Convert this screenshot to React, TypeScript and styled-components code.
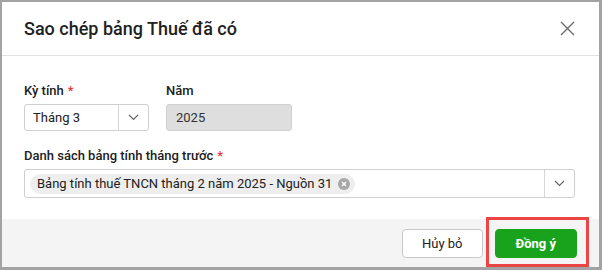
import React from "react";
import styled, { createGlobalStyle } from "styled-components";

const GlobalStyle = createGlobalStyle`
  html, body {
    margin: 0;
    padding: 0;
    background: #ffffff;
  }
  body {
    font-family: Roboto, "Noto Sans", "Liberation Sans", sans-serif;
    color: #212121;
  }
  * {
    box-sizing: border-box;
  }
`;

const Dialog = styled.div`
  position: relative;
  width: 602px;
  height: 270px;
  display: flex;
  flex-direction: column;
  background: #ffffff;
  border: 2px solid #a3a3a3;
  border-right-width: 3px;
  border-bottom-width: 3px;
`;

const Header = styled.div`
  height: 54px;
  flex-shrink: 0;
  display: flex;
  align-items: center;
  justify-content: space-between;
  padding: 0 22px;
  border-bottom: 1px solid #e2e2e2;
`;

const Title = styled.h2`
  margin: 0;
  font-size: 18px;
  font-weight: 500;
  color: #212121;
`;

const CloseButton = styled.button`
  width: 24px;
  height: 24px;
  padding: 0;
  margin-right: -2px;
  border: none;
  background: transparent;
  display: flex;
  align-items: center;
  justify-content: center;
  cursor: pointer;
`;

const Body = styled.div`
  flex: 1;
  padding: 27px 24px 0 22px;
  display: flex;
  flex-direction: column;
  gap: 17px;
`;

const Row = styled.div`
  display: flex;
  gap: 17px;
`;

const Field = styled.div<{ $width?: number }>`
  display: flex;
  flex-direction: column;
  gap: 5px;
  width: ${(p) => (p.$width ? `${p.$width}px` : "100%")};
`;

const Label = styled.label`
  font-size: 13px;
  font-weight: 500;
  line-height: 16px;
  color: #212121;
`;

const Required = styled.span`
  color: #e53935;
  margin-left: 4px;
`;

const SelectBox = styled.div<{ $height?: number }>`
  height: ${(p) => p.$height ?? 27}px;
  display: flex;
  align-items: stretch;
  border: 1px solid #cfcfcf;
  border-radius: 3px;
  background: #ffffff;
`;

const SelectValue = styled.div`
  flex: 1;
  display: flex;
  align-items: center;
  padding-left: 8px;
  font-size: 13px;
  color: #212121;
  overflow: hidden;
`;

const Arrow = styled.div`
  width: 30px;
  border-left: 1px solid #d6d6d6;
  display: flex;
  align-items: center;
  justify-content: center;
`;

const ReadOnlyInput = styled.div`
  height: 27px;
  display: flex;
  align-items: center;
  padding-left: 9px;
  font-size: 13px;
  color: #333333;
  background: #dedede;
  border: 1px solid #d0d0d0;
  border-radius: 3px;
`;

const Tag = styled.div`
  height: 20px;
  display: inline-flex;
  align-items: center;
  gap: 6px;
  padding: 0 5px 0 7px;
  margin-left: -3px;
  border-radius: 10px;
  background: #eeeeee;
  font-size: 13px;
  color: #212121;
  white-space: nowrap;
`;

const TagRemove = styled.span`
  width: 12px;
  height: 12px;
  border-radius: 50%;
  background: #a8a8a8;
  display: inline-flex;
  align-items: center;
  justify-content: center;
`;

const Footer = styled.div`
  height: 48px;
  flex-shrink: 0;
  display: flex;
  align-items: center;
  justify-content: flex-end;
  gap: 12px;
  padding: 1px 22px 0 0;
  background: #f4f4f4;
`;

const Button = styled.button<{ $primary?: boolean }>`
  height: 29px;
  padding: 0 ${(p) => (p.$primary ? 20 : 19)}px;
  border-radius: 4px;
  font-family: Roboto, "Noto Sans", "Liberation Sans", sans-serif;
  font-size: 13px;
  font-weight: ${(p) => (p.$primary ? 700 : 400)};
  color: ${(p) => (p.$primary ? "#ffffff" : "#212121")};
  background: ${(p) => (p.$primary ? "#19a31c" : "#ffffff")};
  border: 1px solid ${(p) => (p.$primary ? "#19a31c" : "#c8c8c8")};
  cursor: pointer;
`;

const Highlight = styled.div`
  position: absolute;
  left: 484px;
  top: 215px;
  width: 103px;
  height: 50px;
  border: 3px solid #ea4444;
  pointer-events: none;
`;

const Chevron = () => (
  <svg width="11" height="7" viewBox="0 0 11 7" fill="none">
    <path d="M1 1l4.5 4.5L10 1" stroke="#666" strokeWidth="1.2" />
  </svg>
);

export default function App() {
  return (
    <>
      <GlobalStyle />
      <Dialog>
        <Header>
          <Title>Sao chép bảng Thuế đã có</Title>
          <CloseButton aria-label="Đóng">
            <svg width="15" height="15" viewBox="0 0 15 15" fill="none">
              <path d="M1 1l13 13M14 1L1 14" stroke="#6b6b6b" strokeWidth="1.4" />
            </svg>
          </CloseButton>
        </Header>
        <Body>
          <Row>
            <Field $width={125}>
              <Label>
                Kỳ tính<Required>*</Required>
              </Label>
              <SelectBox>
                <SelectValue>Tháng 3</SelectValue>
                <Arrow>
                  <Chevron />
                </Arrow>
              </SelectBox>
            </Field>
            <Field $width={126}>
              <Label>Năm</Label>
              <ReadOnlyInput>2025</ReadOnlyInput>
            </Field>
          </Row>
          <Field>
            <Label>
              Danh sách bảng tính tháng trước<Required>*</Required>
            </Label>
            <SelectBox $height={29}>
              <SelectValue>
                <Tag>
                  Bảng tính thuế TNCN tháng 2 năm 2025 - Nguồn 31
                  <TagRemove>
                    <svg width="6" height="6" viewBox="0 0 6 6" fill="none">
                      <path d="M1 1l4 4M5 1L1 5" stroke="#fff" strokeWidth="1.2" />
                    </svg>
                  </TagRemove>
                </Tag>
              </SelectValue>
              <Arrow>
                <Chevron />
              </Arrow>
            </SelectBox>
          </Field>
        </Body>
        <Footer>
          <Button>Hủy bỏ</Button>
          <Button $primary>Đồng ý</Button>
        </Footer>
        <Highlight />
      </Dialog>
    </>
  );
}
